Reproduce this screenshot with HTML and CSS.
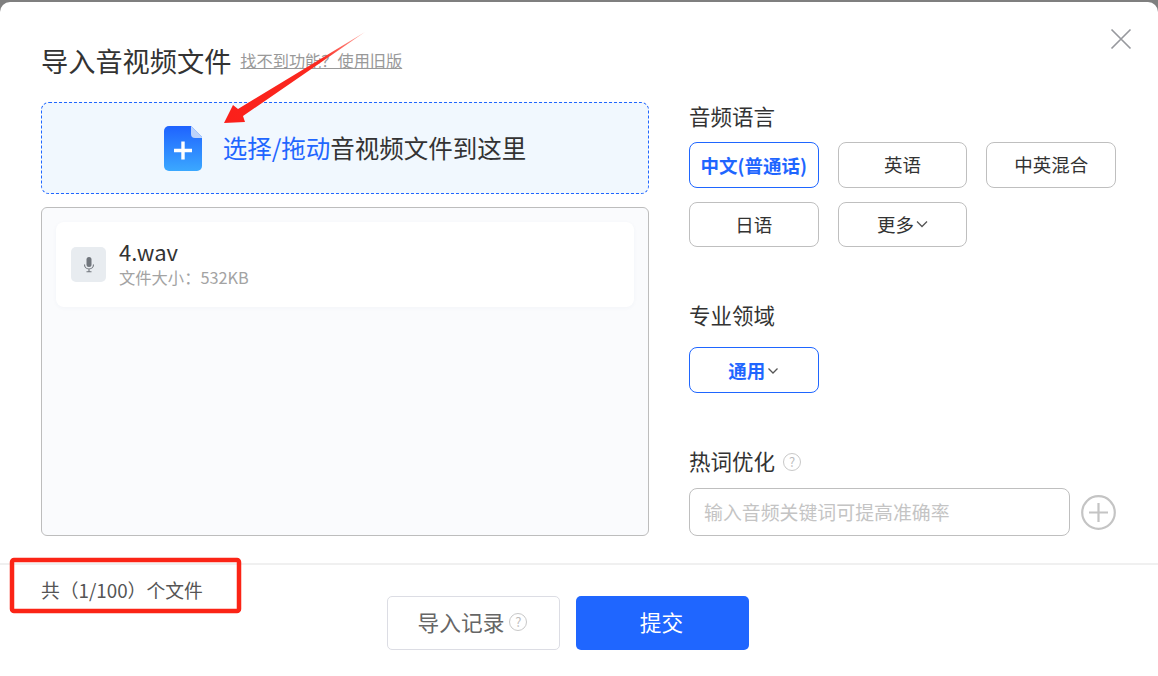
FILE: index.html
```html
<!DOCTYPE html>
<html lang="zh">
<head>
<meta charset="utf-8">
<title>导入音视频文件</title>
<link rel="stylesheet" href="styles.css">
</head>
<body>
<div class="modal">
  <button class="close" aria-label="关闭">
    <svg width="22" height="22" viewBox="0 0 22 22"><path d="M1.5 1.5l19 19M20.5 1.5l-19 19" stroke="#97999e" stroke-width="1.7" fill="none"/></svg>
  </button>
  <div class="content">
    <div class="heading">
      <h1 class="title">导入音视频文件</h1>
      <a class="old-link">找不到功能？使用旧版</a>
    </div>
    <div class="columns">
      <div class="left">
        <div class="drop">
          <svg class="drop-icon" width="38" height="45" viewBox="0 0 38 45">
            <defs><linearGradient id="fileg" x1="0" y1="0" x2="0" y2="1"><stop offset="0" stop-color="#1f63ff"/><stop offset="1" stop-color="#3ba8ff"/></linearGradient></defs>
            <path d="M5 0H27L38 11V40a5 5 0 0 1-5 5H5a5 5 0 0 1-5-5V5a5 5 0 0 1 5-5z" fill="url(#fileg)"/>
            <path d="M27 0L38 11V12H31a4 4 0 0 1-4-4z" fill="#bcd3fb"/>
            <path d="M19 15.500V33.500M10 24.500H28" stroke="#fff" stroke-width="3.400" fill="none"/>
          </svg>
          <span class="drop-text"><em>选择/拖动</em>音视频文件到这里</span>
        </div>
        <div class="list">
          <div class="file">
            <div class="file-icon">
              <svg width="14" height="18" viewBox="0 0 14 18"><rect x="4.500" y="1" width="5" height="10" rx="2.500" fill="#70757c"/><path d="M2.500 8.500a4.500 4.500 0 0 0 9 0M7 13V15.500M4.500 15.800h5" stroke="#70757c" stroke-width="1.100" fill="none"/></svg>
            </div>
            <div class="file-meta">
              <div class="file-name">4.wav</div>
              <div class="file-size">文件大小：532KB</div>
            </div>
          </div>
        </div>
      </div>
      <div class="right">
        <section class="group lang">
          <h2 class="label">音频语言</h2>
          <div class="options">
            <button class="opt active">中文(普通话)</button>
            <button class="opt">英语</button>
            <button class="opt">中英混合</button>
            <button class="opt short">日语</button>
            <button class="opt short">更多<svg class="chev" width="12" height="8" viewBox="0 0 12 8"><path d="M1 1.500l5 5 5-5" stroke="#555" stroke-width="1.300" fill="none"/></svg></button>
          </div>
        </section>
        <section class="group field">
          <h2 class="label">专业领域</h2>
          <div class="options">
            <button class="opt active">通用<svg class="chev" width="12" height="8" viewBox="0 0 12 8"><path d="M1.500 1.500l4.500 4.500 4.500-4.500" stroke="#555" stroke-width="1.300" fill="none"/></svg></button>
          </div>
        </section>
        <section class="group hot">
          <h2 class="label">热词优化<span class="help big">?</span></h2>
          <div class="hot-row">
            <div class="hot-input">输入音频关键词可提高准确率</div>
            <svg width="35" height="35" viewBox="0 0 35 35"><circle cx="17.500" cy="17.500" r="16.300" stroke="#c4c4c4" stroke-width="2.200" fill="none"/><path d="M17.500 8v19M8 17.500h19" stroke="#c4c4c4" stroke-width="2.200" fill="none"/></svg>
          </div>
        </section>
      </div>
    </div>
  </div>
  <div class="footer">
    <div class="count">共（1/100）个文件</div>
    <div class="actions">
      <button class="btn ghost">导入记录<span class="help">?</span></button>
      <button class="btn primary">提交</button>
    </div>
  </div>
  <svg class="marks" width="1158" height="676" viewBox="0 0 1158 676">
    <defs><linearGradient id="arrowg" gradientUnits="userSpaceOnUse" x1="224" y1="123" x2="365" y2="32"><stop offset="0" stop-color="#fb1f1a"/><stop offset="0.7" stop-color="#fb2a20"/><stop offset="1" stop-color="#ffb0a8"/></linearGradient></defs>
    <path d="M365 32L243 116L245 122L224 123L233 105L238 109Z" fill="url(#arrowg)"/>
    <rect x="12" y="560" width="227" height="51" rx="2" fill="none" stroke="#fb2416" stroke-width="4.500"/>
  </svg>
</div>
</body>
</html>
```
FILE: styles.css
```css
* { box-sizing: border-box; }
html, body { margin: 0; height: 100%; }
body {
  background: #7f7f7f;
  padding-top: 2px;
  font-family: "Noto Sans CJK SC", "Noto Sans", sans-serif;
  color: #333;
  overflow: hidden;
}
.modal {
  position: relative;
  height: 674px;
  background: #fff;
  border-radius: 10px 10px 0 0;
  display: flex;
  flex-direction: column;
}
.close {
  position: absolute;
  top: 26px;
  right: 26px;
  padding: 0;
  border: 0;
  background: none;
  line-height: 0;
}
.content { padding: 0 42px 0 41px; height: 561px; }
.heading {
  display: flex;
  align-items: center;
  gap: 10px;
  height: 100px;
  padding-top: 16px;
}
.title { margin: 0; font-size: 27.200px; font-weight: 400; color: #333; line-height: 40px; }
.old-link { font-size: 16.200px; color: #999; text-decoration: underline; line-height: 20px; white-space: nowrap; margin-left: -1px; }
.columns { display: flex; gap: 40px; }
.left { width: 608px; display: flex; flex-direction: column; gap: 13px; }
.drop {
  height: 92px;
  border: 1px dashed #1f66ff;
  border-radius: 8px;
  background: #f1f8fe;
  display: flex;
  align-items: center;
  justify-content: center;
  gap: 21px;
}
.drop-icon { flex: none; }
.drop-text { font-size: 24.500px; color: #333; white-space: nowrap; margin-top: -2px; }
.drop-text em { font-style: normal; color: #1f66ff; }
.list {
  height: 329px;
  border: 1px solid #bdbdbd;
  border-radius: 6px;
  background: #fafbfd;
  padding: 14px;
}
.file {
  height: 85px;
  width: 578px;
  background: #fff;
  border-radius: 8px;
  box-shadow: 0 1px 4px rgba(60, 80, 120, 0.04);
  display: flex;
  align-items: center;
  gap: 13px;
  padding-left: 15px;
}
.file-icon {
  width: 35px;
  height: 35px;
  border-radius: 5px;
  background: #e8ecf0;
  display: flex;
  align-items: center;
  justify-content: center;
}
.file-meta { margin-top: -2px; }
.file-name { font-size: 22px; line-height: 27px; color: #333; }
.file-size { font-size: 16.300px; line-height: 25px; color: #a3a3a3; }
.right { width: 427px; }
.group .label {
  margin: 0;
  font-size: 21.500px;
  font-weight: 400;
  color: #333;
  line-height: 32px;
  height: 32px;
  display: flex;
  align-items: center;
}
.lang .label { margin-top: -2px; }
.options { display: grid; grid-template-columns: repeat(3, 1fr); gap: 14px 19px; margin-top: 10px; }
.opt {
  height: 46px;
  background: #fff;
  border: 1px solid #bfbfbf;
  border-radius: 8px;
  font: inherit;
  font-size: 18.500px;
  color: #333;
  padding: 0 0 2px;
  display: flex;
  align-items: center;
  justify-content: center;
  white-space: nowrap;
}
.opt.short { height: 45px; }
.opt.active { border-color: #1f66ff; color: #1f66ff; font-weight: 700; padding-bottom: 0; }
.chev { margin-left: 2px; margin-top: 1px; }
.field { margin-top: 52px; }
.field .options { margin-top: 16px; }
.hot { margin-top: 52px; }
.hot-row { display: flex; align-items: center; gap: 11px; margin-top: 11px; }
.hot-input {
  width: 381px;
  height: 48px;
  border: 1px solid #bfbfbf;
  border-radius: 8px;
  font-size: 18.900px;
  color: #c4c4c4;
  line-height: 46px;
  padding-left: 14px;
}
.help {
  width: 18px;
  height: 18px;
  border: 1.500px solid #c8c8c8;
  border-radius: 50%;
  color: #bdbdbd;
  font-size: 13px;
  line-height: 15px;
  font-weight: 400;
  text-align: center;
  display: inline-block;
  margin-left: 5px;
}
.help.big { margin-left: 8px; margin-top: 1px; }
.footer {
  flex: 1;
  border-top: 2px solid #f0f0f0;
  display: flex;
  align-items: flex-start;
  padding-left: 41px;
}
.count { width: 346px; font-size: 18.800px; color: #555; line-height: 26px; margin-top: 12px; white-space: nowrap; }
.actions { display: flex; gap: 16px; margin-top: 31px; }
.btn {
  width: 173px;
  height: 54px;
  border-radius: 5px;
  font: inherit;
  font-size: 21.700px;
  padding: 0 0 3px;
  display: flex;
  align-items: center;
  justify-content: center;
}
.ghost { background: #fff; border: 1px solid #dcdde4; color: #666; padding-right: 2px; }
.primary { background: #1f66ff; border: 0; color: #fff; padding-right: 2px; }
.marks { position: absolute; left: 0; top: -2px; pointer-events: none; }
```
